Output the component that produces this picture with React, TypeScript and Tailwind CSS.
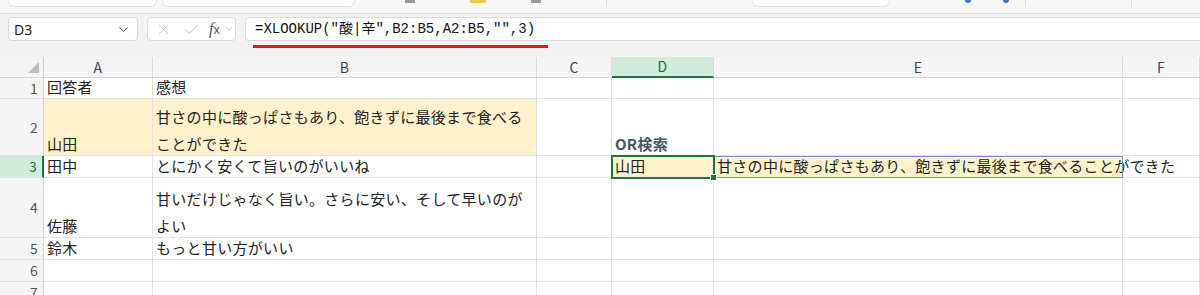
import { Check, ChevronDown, X } from 'lucide-react';
import clsx from 'clsx';
import type { ReactNode } from 'react';

const grid = 'border-r border-b border-[#e2e2e2]';

function Cell({ children, className }: { children?: ReactNode; className?: string }) {
  return (
    <div className={clsx(grid, 'flex items-end px-[3px] pb-[1px] leading-[20px] text-[#222] min-w-0', className)}>
      {children}
    </div>
  );
}

function Wrapped({ children }: { children: ReactNode }) {
  return <div className="leading-[27px] -mb-[3px]">{children}</div>;
}

function ColHead({ label, active }: { label: string; active?: boolean }) {
  return (
    <div
      className={clsx(
        'flex items-center justify-center border-r border-[#dadada] text-[14px]',
        active
          ? 'bg-[#d2ecdc] text-[#1d6b40] border-b-2 border-b-[#217346]'
          : 'bg-[#f5f5f5] text-[#444] border-b border-b-[#d4d4d4]'
      )}
    >
      {label}
    </div>
  );
}

function RowHead({ n, active }: { n: number; active?: boolean }) {
  return (
    <div
      className={clsx(
        'flex items-center justify-end pr-[5px] border-b border-[#e2e2e2] text-[14px]',
        active
          ? 'bg-[#d2ecdc] text-[#1d6b40] border-r-2 border-r-[#217346]'
          : 'bg-[#f5f5f5] text-[#555] border-r border-r-[#d0d0d0]'
      )}
    >
      {n}
    </div>
  );
}

export default function App() {
  return (
    <div className="w-[1200px] h-[295px] overflow-hidden bg-white font-['Noto_Sans_CJK_JP',sans-serif] text-[15px] tracking-[0.3px]">
      {/* ribbon edge */}
      <div className="h-[14px] bg-[#f7f7f7] border-b border-[#dedede] flex items-start gap-[5px] px-[8px]">
        <div className="w-[149px] h-[7px] bg-white border border-t-0 border-[#e2e2e2] rounded-b-[6px]" />
        <div className="w-[193px] h-[7px] bg-white border border-t-0 border-[#e2e2e2] rounded-b-[6px]" />
        <div className="ml-[45px] w-[10px] h-[3px] bg-[#9a9a9a] mt-0" />
        <div className="ml-[50px] w-[16px] h-[3px] bg-[#f2c94c]" />
        <div className="ml-[40px] w-[10px] h-[3px] bg-[#9a9a9a]" />
        <div className="ml-[60px] w-px h-[7px] bg-[#dcdcdc]" />
        <div className="ml-[140px] w-[138px] h-[7px] bg-white border border-t-0 border-[#e2e2e2] rounded-b-[6px]" />
        <div className="ml-[70px] w-[6px] h-[3px] bg-[#2b7cd3] rounded-b-full" />
        <div className="ml-[27px] w-[6px] h-[3px] bg-[#2b7cd3] rounded-b-full" />
        <div className="ml-[11px] w-px h-[7px] bg-[#dcdcdc]" />
        <div className="ml-[100px] w-px h-[7px] bg-[#dcdcdc]" />
      </div>

      {/* formula bar */}
      <div className="bg-[#f3f3f3] pt-[3px] pl-[8px] flex gap-[9px] h-[27px] font-['Noto_Sans','Noto_Sans_CJK_JP',sans-serif] tracking-normal">
        <div className="w-[130px] h-[24px] bg-white border border-[#d9d9d9] rounded-[4px] flex items-center justify-between pl-[5px] pr-[6px] text-[14px] text-[#222]">
          <span>D3</span>
          <ChevronDown size={15} strokeWidth={1.6} className="text-[#444]" />
        </div>
        <div className="w-[89px] h-[24px] bg-white border border-[#d9d9d9] rounded-[4px] flex items-center pl-[7px] text-[#b4b4b4]">
          <X size={17} strokeWidth={1.1} />
          <Check size={19} strokeWidth={1.1} className="ml-[10px]" />
          <span className="ml-[8px] font-['Liberation_Serif',serif] italic text-[16px] text-[#555] leading-none">
            f<span className="text-[12px] not-italic font-['Noto_Sans',sans-serif]">x</span>
          </span>
          <ChevronDown size={10} strokeWidth={1.5} className="ml-[4px] text-[#999]" />
        </div>
        <div className="flex-1 h-[24px] bg-white border border-r-0 border-[#d9d9d9] rounded-l-[4px] flex items-center pl-[9px] text-[14px] text-[#111] font-['Liberation_Mono','Noto_Sans_CJK_JP',monospace]">
          =XLOOKUP("酸|辛",B2:B5,A2:B5,"",3)
        </div>
      </div>

      {/* gap with annotation */}
      <div className="h-[16px] bg-[#f3f3f3] pt-[4px]">
        <div className="ml-[253px] w-[295px] h-[3px] bg-[#e0161b]" />
      </div>

      {/* sheet */}
      <div className="grid grid-cols-[44px_109px_384px_75px_102px_409px_1fr] grid-rows-[21px_21px_57px_22px_60px_22px_22px_22px] font-['Noto_Sans_CJK_JP',sans-serif]">
        <div className="bg-[#f5f5f5] border-r border-b border-r-[#d0d0d0] border-b-[#d4d4d4] flex items-end justify-end pr-[4px] pb-[4px]">
          <svg width="11" height="11" viewBox="0 0 11 11">
            <polygon points="11,0 11,11 0,11" fill="#bdbdbd" />
          </svg>
        </div>
        <ColHead label="A" />
        <ColHead label="B" />
        <ColHead label="C" />
        <ColHead label="D" active />
        <ColHead label="E" />
        <ColHead label="F" />

        <RowHead n={1} />
        <Cell>回答者</Cell>
        <Cell>感想</Cell>
        <Cell />
        <Cell />
        <Cell />
        <Cell />

        <RowHead n={2} />
        <Cell className="bg-[#fff2cc]">山田</Cell>
        <Cell className="bg-[#fff2cc]">
          <Wrapped>甘さの中に酸っぱさもあり、飽きずに最後まで食べることができた</Wrapped>
        </Cell>
        <Cell />
        <Cell className="font-bold text-[#44546a]">OR検索</Cell>
        <Cell />
        <Cell />

        <RowHead n={3} active />
        <Cell>田中</Cell>
        <Cell>とにかく安くて旨いのがいいね</Cell>
        <Cell />
        <Cell className="relative z-10 bg-[#fff2cc] outline-2 outline-[#217346] -outline-offset-1">
          山田
          <div className="absolute -right-[4px] -bottom-[4px] w-[7px] h-[7px] bg-[#217346] border border-white" />
        </Cell>
        <Cell className="bg-[#fff2cc] outline-1 outline-[#7191c0] -outline-offset-1 whitespace-nowrap overflow-visible">
          甘さの中に酸っぱさもあり、飽きずに最後まで食べることができた
        </Cell>
        <Cell />

        <RowHead n={4} />
        <Cell>佐藤</Cell>
        <Cell>
          <Wrapped>甘いだけじゃなく旨い。さらに安い、そして早いのがよい</Wrapped>
        </Cell>
        <Cell />
        <Cell />
        <Cell />
        <Cell />

        <RowHead n={5} />
        <Cell>鈴木</Cell>
        <Cell>もっと甘い方がいい</Cell>
        <Cell />
        <Cell />
        <Cell />
        <Cell />

        <RowHead n={6} />
        <Cell />
        <Cell />
        <Cell />
        <Cell />
        <Cell />
        <Cell />

        <RowHead n={7} />
        <Cell />
        <Cell />
        <Cell />
        <Cell />
        <Cell />
        <Cell />
      </div>
    </div>
  );
}
